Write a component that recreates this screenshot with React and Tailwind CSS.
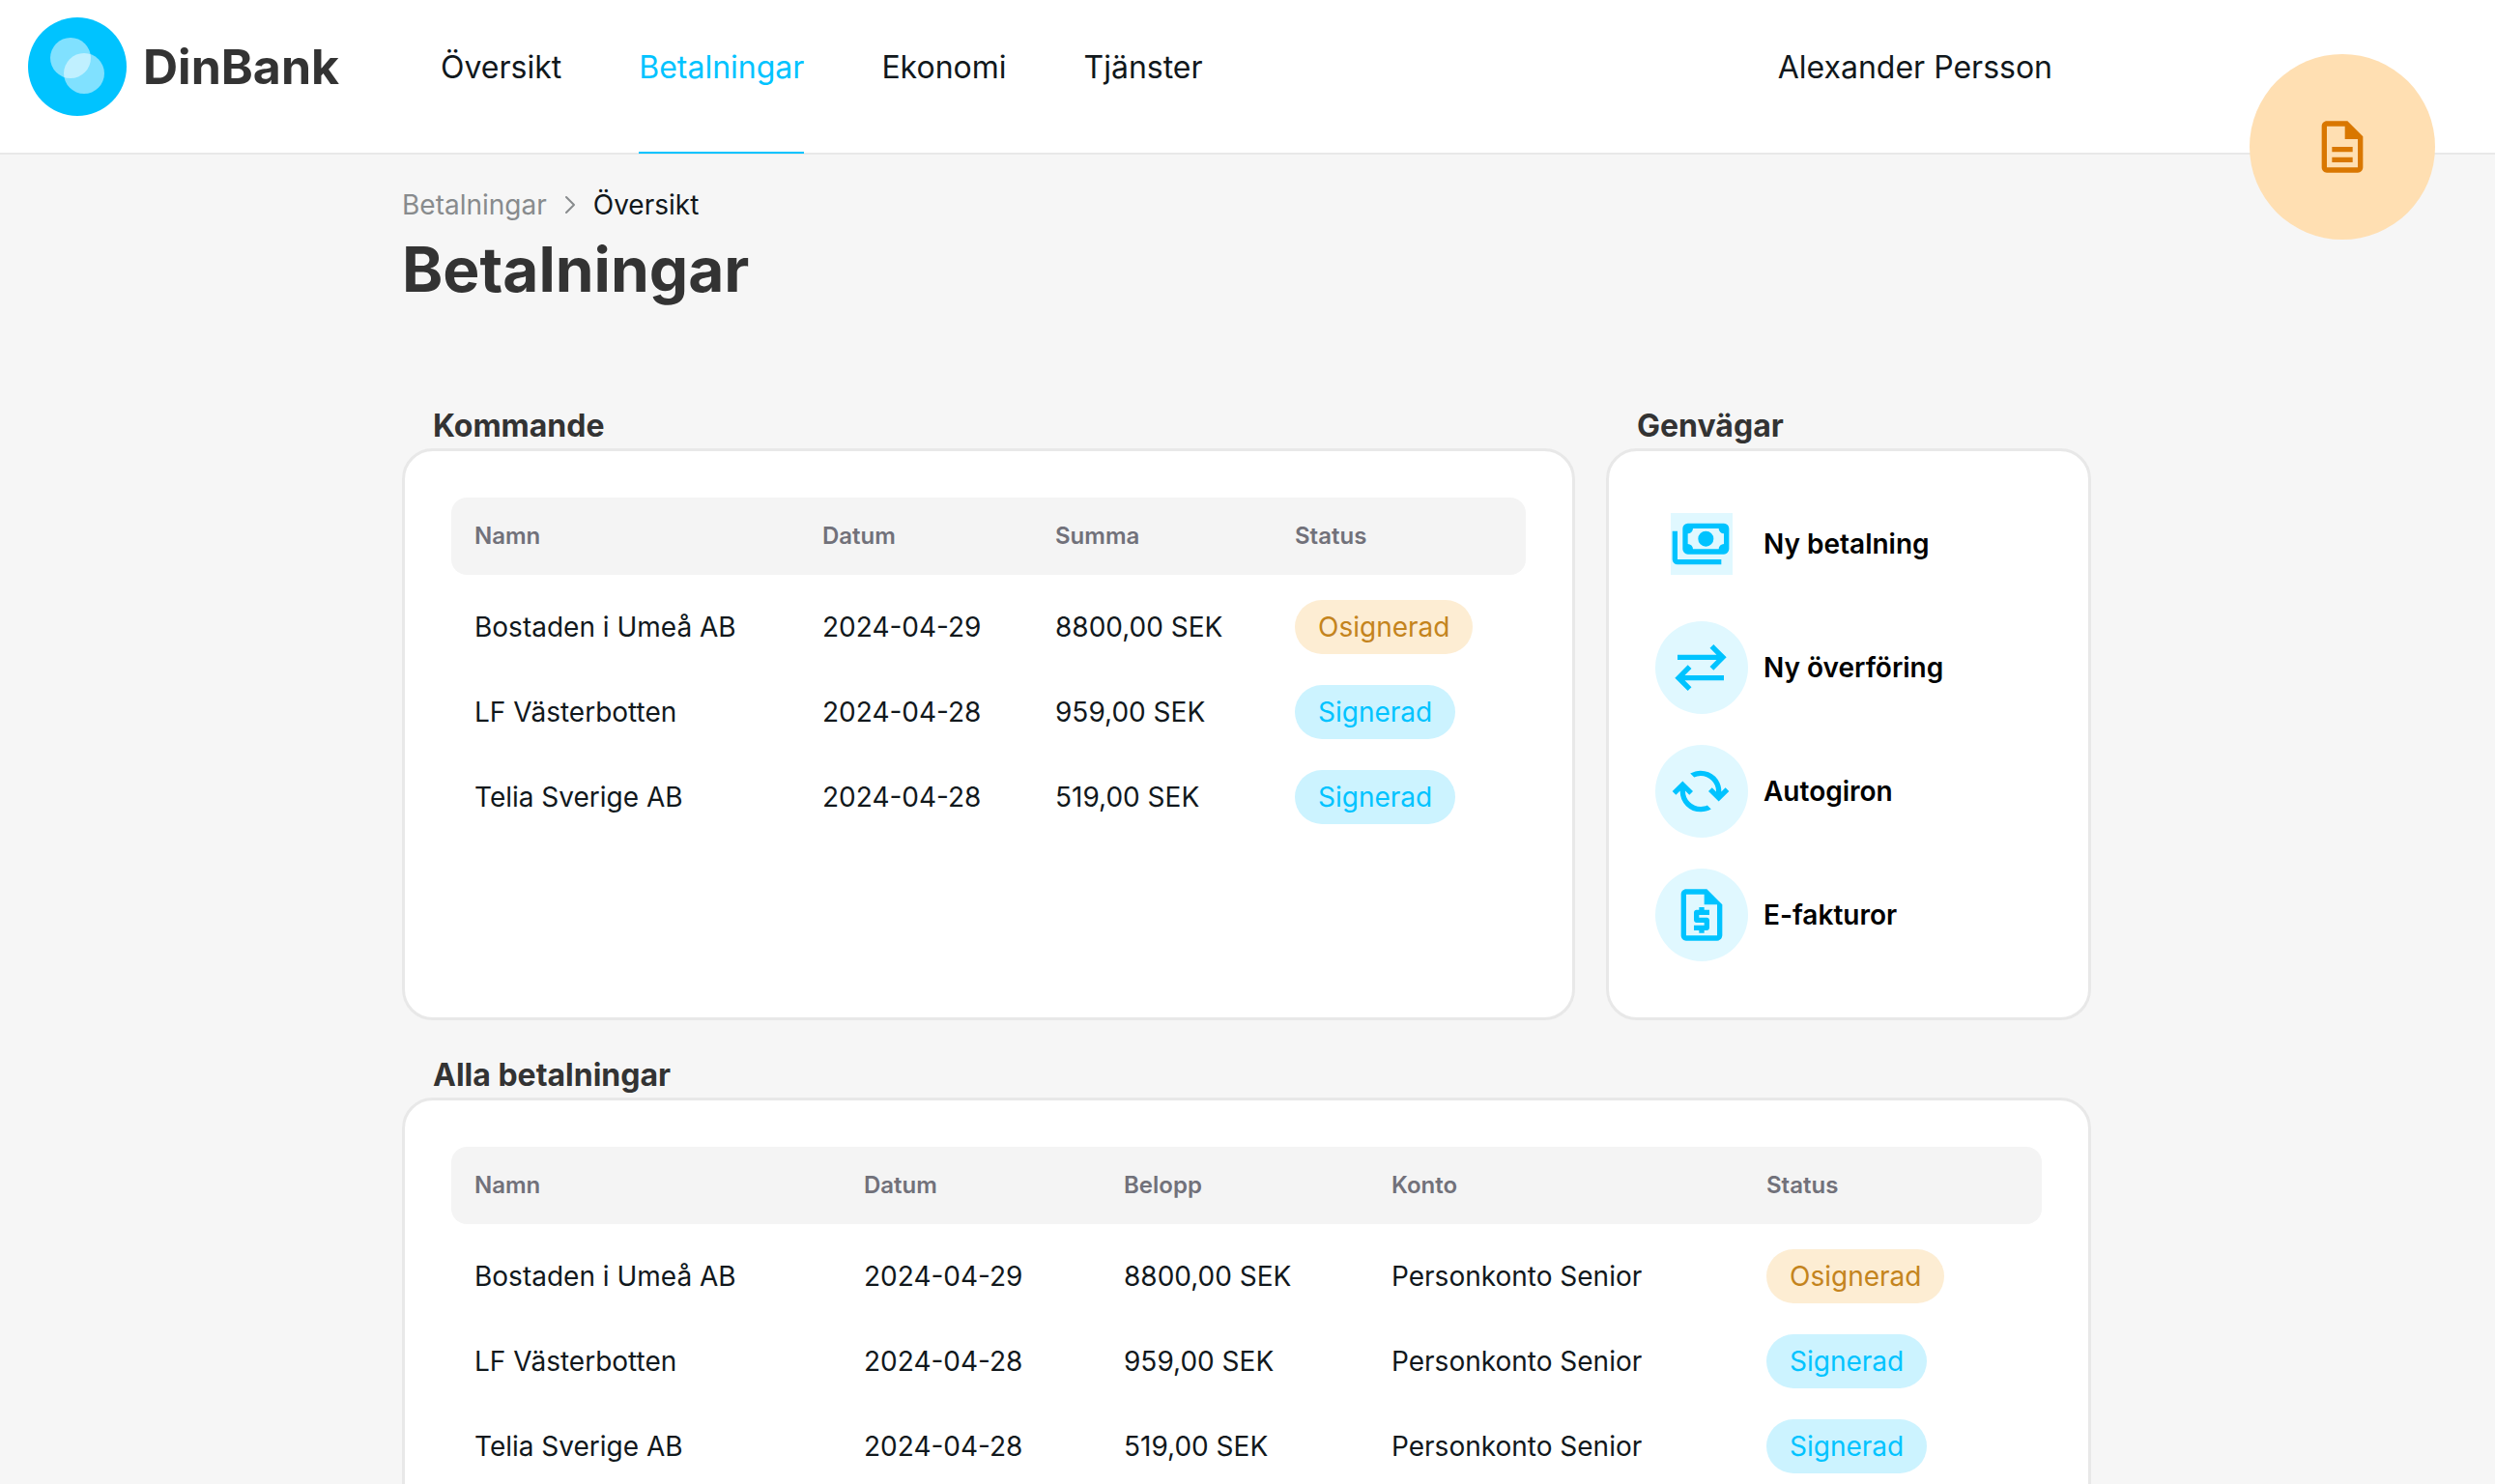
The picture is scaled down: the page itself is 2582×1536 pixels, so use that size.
import React from "react";
import { MdOutlineDescription, MdOutlineRequestQuote } from "react-icons/md";

const navItems = ["Översikt", "Betalningar", "Ekonomi", "Tjänster"];

const payments = [
  { name: "Bostaden i Umeå AB", date: "2024-04-29", amount: "8800,00 SEK", account: "Personkonto Senior", status: "Osignerad" },
  { name: "LF Västerbotten", date: "2024-04-28", amount: "959,00 SEK", account: "Personkonto Senior", status: "Signerad" },
  { name: "Telia Sverige AB", date: "2024-04-28", amount: "519,00 SEK", account: "Personkonto Senior", status: "Signerad" },
];

function Logo() {
  return (
    <svg viewBox="0 0 102 102" className="size-[102px] shrink-0" aria-hidden="true">
      <circle cx="51" cy="51" r="51" fill="#00c3ff" />
      <circle cx="44" cy="42" r="21" fill="#fff" fillOpacity="0.5" />
      <circle cx="58" cy="58" r="21" fill="#fff" fillOpacity="0.5" />
    </svg>
  );
}

function SymbolIcon({ d }) {
  return (
    <svg viewBox="15 -960 960 960" className="size-16" fill="currentColor" aria-hidden="true">
      <path d={d} />
    </svg>
  );
}

const paymentsPath =
  "M560-440q-50 0-85-35t-35-85q0-50 35-85t85-35q50 0 85 35t35 85q0 50-35 85t-85 35ZM280-320q-33 0-56.5-23.5T200-400v-320q0-33 23.5-56.5T280-800h560q33 0 56.5 23.5T920-720v320q0 33-23.5 56.5T840-320H280Zm80-80h400q0-33 23.5-56.5T840-480v-160q-33 0-56.5-23.5T760-720H360q0 33-23.5 56.5T280-640v160q33 0 56.5 23.5T360-400Zm440 240H120q-33 0-56.5-23.5T40-240v-440h80v440h680v80Z";
const transferPath =
  "M280-120 80-320l200-200 57 56-104 104h607v80H233l104 104-57 56Zm400-320-57-56 104-104H120v-80h607L623-784l57-56 200 200-200 200Z";
const cachedPath =
  "M482-160q-134 0-228-93t-94-227v-7l-64 64-56-56 160-160 160 160-56 56-64-64v7q0 100 70.5 170T482-240q26 0 51-6t49-18l60 60q-38 22-78 33t-82 11Zm278-161L600-481l56-56 64 64v-7q0-100-70.5-170T478-720q-26 0-51 6t-49 18l-60-60q38-22 78-33t82-11q134 0 228 93t94 227v7l64-64 56 56-160 160Z";

const shortcuts = [
  { label: "Ny betalning", icon: <SymbolIcon d={paymentsPath} />, square: true },
  { label: "Ny överföring", icon: <SymbolIcon d={transferPath} /> },
  { label: "Autogiron", icon: <SymbolIcon d={cachedPath} /> },
  { label: "E-fakturor", icon: <MdOutlineRequestQuote className="size-16" aria-hidden="true" /> },
];

function Chip({ status }) {
  const tone = status === "Signerad" ? "bg-[#ccf3ff] text-[#00c3ff]" : "bg-[#fdedd3] text-[#c4841d]";
  return <span className={`inline-flex h-14 items-center rounded-[28px] px-6 align-middle ${tone}`}>{status}</span>;
}

function PaymentTable({ columns, label }) {
  return (
    <table aria-label={label} className="w-full table-fixed text-left text-[28px] leading-10 text-[#11181c]">
      <colgroup>
        {columns.map((c) => (
          <col key={c.key} className={c.width} />
        ))}
      </colgroup>
      <thead>
        <tr className="h-20 text-[24px] text-[#71717a]">
          {columns.map((c) => (
            <th key={c.key} scope="col" className="bg-[#f4f4f4] px-6 font-semibold first:rounded-l-2xl last:rounded-r-2xl">
              {c.title}
            </th>
          ))}
        </tr>
      </thead>
      <tbody className="before:block before:h-[10px]">
        {payments.map((p) => (
          <tr key={p.name} className="h-22">
            {columns.map((c) => (
              <td key={c.key} className="px-6 whitespace-nowrap">
                {c.key === "status" ? <Chip status={p.status} /> : p[c.key]}
              </td>
            ))}
          </tr>
        ))}
      </tbody>
    </table>
  );
}

function Section({ title, children }) {
  return (
    <section className="flex flex-col">
      <h2 className="px-8 pt-0.5 text-[32px] leading-[46px] font-bold text-[#333]">{title}</h2>
      <div className="grow rounded-[32px] border-3 border-[#e8e8e8] bg-white p-12">{children}</div>
    </section>
  );
}

export default function App() {
  return (
    <div className="relative h-screen overflow-hidden bg-[#f6f6f6] font-['Inter',sans-serif] text-[#11181c]">
      <header className="flex h-40 items-start border-b-2 border-[#e8e8e8] bg-white pl-[29px] text-[32px]">
        <a href="#" className="mt-[18px] flex items-center gap-[17px] text-[50px] font-bold text-[#333]">
          <Logo />
          DinBank
        </a>
        <nav className="ml-[105px] flex gap-20">
          {navItems.map((item) => (
            <a
              key={item}
              href="#"
              aria-current={item === "Betalningar" ? "page" : undefined}
              className="flex h-[159px] items-start pt-[46px] leading-12 aria-[current=page]:border-b-2 aria-[current=page]:border-[#00c3ff] aria-[current=page]:text-[#00c3ff]"
            >
              {item}
            </a>
          ))}
        </nav>
        <span className="mr-[458px] ml-auto pt-[46px] leading-12">Alexander Persson</span>
      </header>

      <button
        type="button"
        aria-label="Dokument"
        className="absolute top-14 right-[62px] flex size-48 items-center justify-center rounded-full bg-[#ffdfb2] text-[#d97700]"
      >
        <MdOutlineDescription className="size-16" />
      </button>

      <main className="mx-auto max-w-[1750px] pt-8 pr-0.5">
        <nav aria-label="Brödsmulor" className="flex items-center text-[28px] leading-10">
          <a href="#" className="text-[#888b8d]">Betalningar</a>
          <svg viewBox="0 0 24 24" className="mx-3 size-6" fill="none" stroke="#888b8d" strokeWidth="2" strokeLinecap="round" strokeLinejoin="round" aria-hidden="true">
            <path d="M8 4l8 8-8 8" />
          </svg>
          <span aria-current="page">Översikt</span>
        </nav>
        <h1 className="text-[64px] leading-[94px] font-bold text-[#333]">Betalningar</h1>

        <div className="mt-[90px] grid grid-cols-[1214fr_502fr] gap-8">
          <Section title="Kommande">
            <PaymentTable
              label="Kommande"
              columns={[
                { key: "name", title: "Namn", width: "w-[360px]" },
                { key: "date", title: "Datum", width: "w-[241px]" },
                { key: "amount", title: "Summa", width: "w-[248px]" },
                { key: "status", title: "Status", width: "w-[263px]" },
              ]}
            />
          </Section>
          <Section title="Genvägar">
            <ul className="mb-[10px] flex flex-col gap-8">
              {shortcuts.map((s) => (
                <li key={s.label}>
                  <button type="button" className="flex items-center gap-4 text-[28px] leading-10 font-semibold text-black">
                    <span className="flex size-24 items-center justify-center">
                      <span className={s.square ? "bg-[#e0f8ff] text-[#00c3ff]" : "rounded-full bg-[#e0f8ff] p-4 text-[#00c3ff]"}>{s.icon}</span>
                    </span>
                    {s.label}
                  </button>
                </li>
              ))}
            </ul>
          </Section>
        </div>

        <div className="mt-8">
          <Section title="Alla betalningar">
            <PaymentTable
              label="Alla betalningar"
              columns={[
                { key: "name", title: "Namn", width: "w-[403px]" },
                { key: "date", title: "Datum", width: "w-[269px]" },
                { key: "amount", title: "Belopp", width: "w-[277px]" },
                { key: "account", title: "Konto", width: "w-[388px]" },
                { key: "status", title: "Status", width: "w-[309px]" },
              ]}
            />
          </Section>
        </div>
      </main>
    </div>
  );
}
